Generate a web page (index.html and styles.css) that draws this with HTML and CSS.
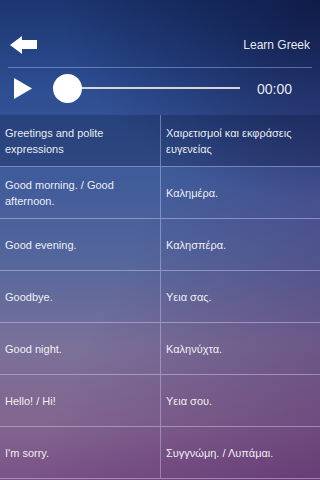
FILE: index.html
```html
<!DOCTYPE html>
<html lang="en">
<head>
<meta charset="utf-8">
<link rel="stylesheet" href="styles.css">
</head>
<body>
<div class="screen">
  <header class="topbar">
    <svg class="back" width="28" height="18" viewBox="0 0 28 18">
      <polygon points="0,9 12,0 12,4 27,4 27,13 12,13 12,18" fill="#fff"/>
    </svg>
    <span class="title">Learn Greek</span>
  </header>
  <div class="player">
    <svg class="play" width="18" height="21" viewBox="0 0 18 21">
      <polygon points="0,0 18,10.5 0,21" fill="#fff"/>
    </svg>
    <div class="slider">
      <div class="track"></div>
      <div class="thumb"></div>
    </div>
    <span class="time">00:00</span>
  </div>
  <div class="table">
    <div class="row head"><div class="cell">Greetings and polite expressions</div><div class="cell">Χαιρετισμοί και εκφράσεις ευγενείας</div></div>
    <div class="row"><div class="cell">Good morning. / Good afternoon.</div><div class="cell">Καλημέρα.</div></div>
    <div class="row"><div class="cell">Good evening.</div><div class="cell">Καλησπέρα.</div></div>
    <div class="row"><div class="cell">Goodbye.</div><div class="cell">Υεια σας.</div></div>
    <div class="row"><div class="cell">Good night.</div><div class="cell">Καληνύχτα.</div></div>
    <div class="row"><div class="cell">Hello! / Hi!</div><div class="cell">Υεια σου.</div></div>
    <div class="row"><div class="cell">I'm sorry.</div><div class="cell">Συγγνώμη. / Λυπάμαι.</div></div>
  </div>
</div>
</body>
</html>
```
FILE: styles.css
```css
html, body {
  margin: 0;
  padding: 0;
}
body {
  width: 320px;
  height: 480px;
  overflow: hidden;
  font-family: "Liberation Sans", Arial, sans-serif;
  color: rgba(255, 255, 255, 0.92);
}
.screen {
  width: 320px;
  height: 480px;
  overflow: hidden;
  background:
    radial-gradient(ellipse 260px 200px at 320px 0px, rgba(10, 20, 60, 0.75), rgba(10, 20, 60, 0)),
    linear-gradient(115deg, rgba(0, 0, 0, 0) 45%, rgba(70, 20, 90, 0.35) 100%),
    linear-gradient(to bottom, #1c3670 0%, #2d4d92 18%, #3d5a9a 35%, #55679c 55%, #7a7199 72%, #82668f 88%, #7a5287 100%);
}
.topbar {
  height: 44px;
  padding-top: 23px;
  margin: 0 8px;
  padding-left: 2px;
  padding-right: 2px;
  display: flex;
  align-items: center;
  justify-content: space-between;
  border-bottom: 1px solid rgba(170, 190, 240, 0.45);
}
.back {
  display: block;
}
.title {
  font-size: 12px;
}
.player {
  height: 41px;
  padding-bottom: 6px;
  display: flex;
  align-items: center;
}
.play {
  display: block;
  margin-left: 14px;
}
.slider {
  position: relative;
  width: 187px;
  height: 29px;
  margin-left: 21px;
}
.track {
  position: absolute;
  left: 14px;
  right: 0;
  top: 13px;
  height: 2px;
  background: #d9d5d0;
}
.thumb {
  position: absolute;
  left: 0;
  top: 0;
  width: 29px;
  height: 29px;
  border-radius: 50%;
  background: #fff;
}
.time {
  margin-left: 17px;
  font-size: 14px;
}
.table {
  display: flex;
  flex-direction: column;
}
.row {
  display: grid;
  grid-template-columns: 161px 159px;
  height: 52px;
  box-sizing: border-box;
  border-bottom: 1px solid rgba(220, 210, 255, 0.45);
}
.row.head {
  background: rgba(0, 10, 40, 0.22);
}
.cell {
  display: flex;
  align-items: center;
  padding: 0 5px;
  font-size: 11px;
  line-height: 16px;
}
.cell:first-child {
  border-right: 1px solid rgba(220, 210, 255, 0.4);
}
```
